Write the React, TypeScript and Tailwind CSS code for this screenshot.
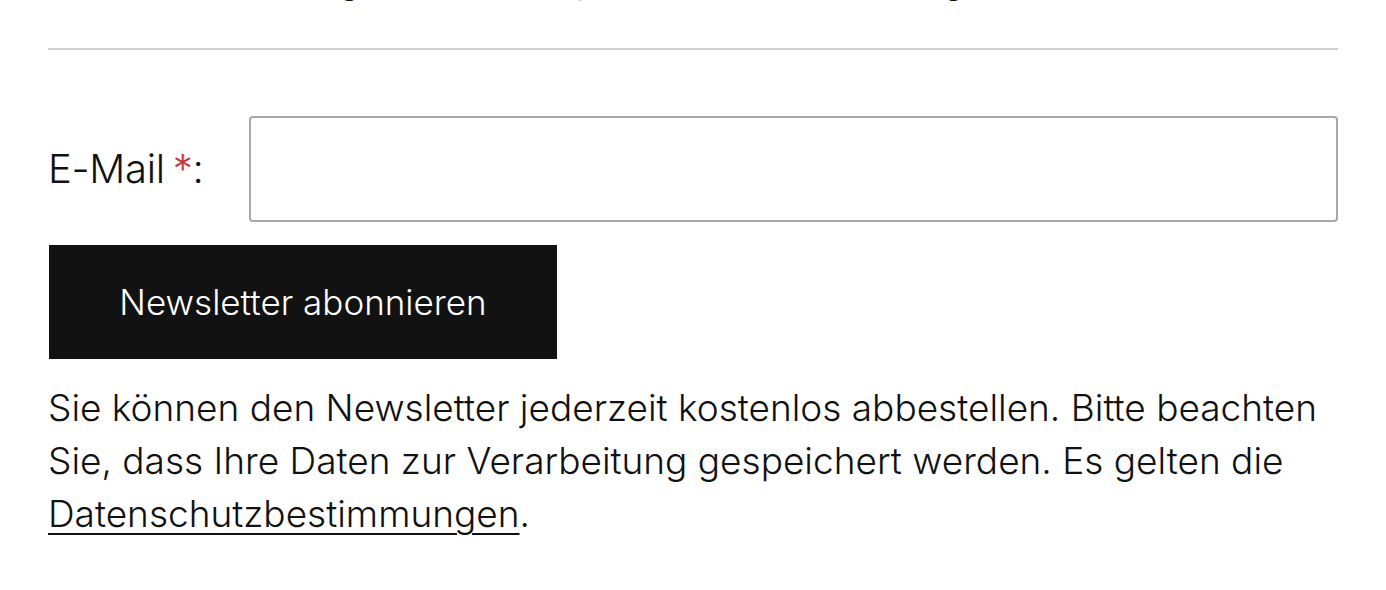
export default function App() {
  return (
    <div className="w-[1386px] h-[590px] overflow-hidden bg-white text-[#111] font-['Inter','Liberation_Sans',sans-serif] font-light">
      <div className="px-[48px]">
        {/* intro sentence, scrolled mostly out of view */}
        <div className="h-[7px] overflow-hidden flex items-end">
          <p className="text-[37px] leading-[54px] whitespace-nowrap">
            Alle neuesten Angebote direkt per E-Mail erhalten – gratis.
          </p>
        </div>
        <div className="mt-[41px] h-[2px] bg-[#d0d0d0]" />

        <div className="mt-[66px] flex items-center">
          <label className="w-[201px] text-[40px] tracking-[-0.3px]">
            E-Mail<span className="text-[#d0323a] ml-[8px]">*</span>:
          </label>
          <input
            type="email"
            className="flex-1 h-[106px] border-2 border-[#a8a8a8] rounded-[4px] outline-none px-4 text-[36px]"
          />
        </div>

        <button className="mt-[23px] ml-px w-[508px] h-[114px] bg-[#121212] text-white text-[35px]">
          Newsletter abonnieren
        </button>

        <p className="mt-[22px] text-[37px] leading-[53px]">
          Sie können den Newsletter jederzeit kostenlos abbestellen. Bitte beachten Sie, dass Ihre Daten zur
          Verarbeitung gespeichert werden. Es gelten die{" "}
          <a href="#" className="underline underline-offset-[6px] decoration-[2px]">
            Datenschutzbestimmungen
          </a>
          .
        </p>
      </div>
    </div>
  );
}
